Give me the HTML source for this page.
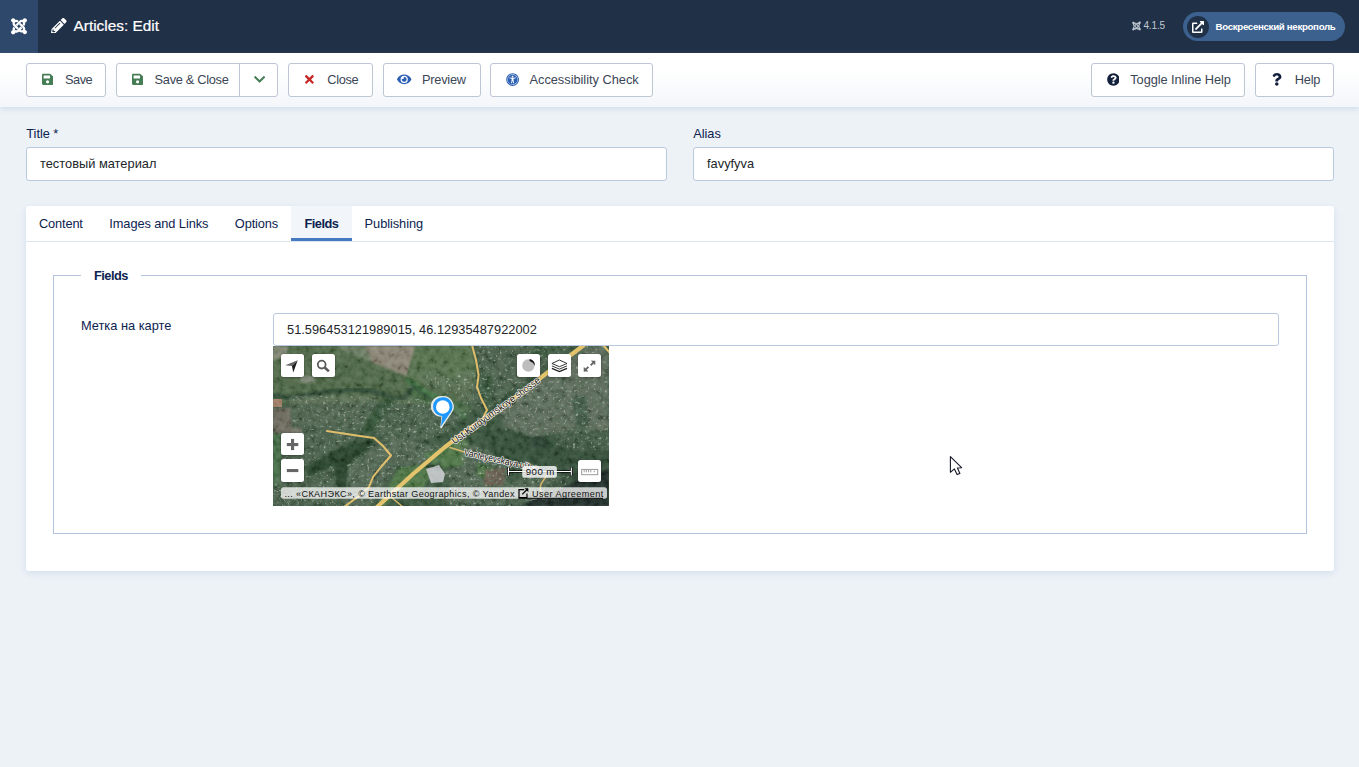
<!DOCTYPE html>
<html lang="en">
<head>
<meta charset="utf-8">
<title>Articles: Edit</title>
<style>
*{box-sizing:border-box;margin:0;padding:0}
html,body{width:1359px;height:767px;overflow:hidden}
body{font-family:"Liberation Sans",sans-serif;font-size:12.8px;color:#212529;background:#edf2f7;position:relative}
svg{display:block}
.abs{position:absolute}
.t{position:absolute;white-space:nowrap;line-height:1}

/* header */
#header{position:absolute;left:0;top:0;width:1359px;height:53px;background:#1f3047}
#logo{position:absolute;left:0;top:0;width:38px;height:53px;background:#2e486b}
#logo svg{position:absolute;left:11px;top:16.9px;width:16px;height:18.3px}
#ptitle svg{position:absolute;left:51px;top:17.7px;width:15.6px;height:15.6px}
#ptitle .t{left:73.5px;top:17.9px;font-size:15.4px;color:#fff;font-weight:400;-webkit-text-stroke:.22px #fff}
#ver{position:absolute;left:1132px;top:21px;height:10px}
#ver svg{position:absolute;left:0;top:0;width:9px;height:10px}
#ver .t{left:11.4px;top:0;font-size:10px;color:#c3cad5;letter-spacing:-.12px}
#pill{position:absolute;left:1183px;top:12px;width:162px;height:29px;border-radius:15px;background:#3d618f}
#pill .circ{position:absolute;left:4px;top:3.5px;width:22px;height:22px;border-radius:50%;background:#1f3047}
#pill svg{position:absolute;left:9px;top:8.5px;width:12px;height:12px}
#pill .t{left:32.6px;top:9.6px;font-size:9.7px;color:#fff;font-weight:700;letter-spacing:-.32px}

/* subhead toolbar */
#subhead{position:absolute;left:0;top:53px;width:1359px;height:54px;background:linear-gradient(#fff,#fff 30%,#f3f6fa);box-shadow:0 2px 5px rgba(150,178,208,.32)}
.btn{position:absolute;top:10px;height:34px;background:#fff;border:1px solid #bcc6d4;border-radius:3px;color:#3b4656;font-size:12.8px}
.btn .t{top:9.5px}
.btn svg{position:absolute}

/* form */
.lbl{color:#0c2350;font-size:12.8px}
.inp{position:absolute;height:34px;background:#fff;border:1px solid #b8c9e0;border-radius:3px}
.inp .t{left:13px;top:10px;letter-spacing:.02px;font-size:12.8px;color:#212529}

#card{position:absolute;left:26px;top:206px;width:1308px;height:365px;background:#fff;border-radius:3px;box-shadow:0 2px 7px rgba(150,178,208,.3)}
#tabs{position:absolute;left:0;top:0;width:1308px;height:36px;border-bottom:1px solid #dbe3ef}
#tabs .t{top:11.5px;color:#0c2350;font-size:12.8px}
#tab-act{position:absolute;left:265px;top:0;width:61px;height:35px;background:#f2f5f9;box-shadow:inset 0 -3px 0 #457ac1}
#fs{position:absolute;left:27px;top:69px;width:1254px;height:259px;border:1px solid #b3c3dc}
#legend{position:absolute;left:27px;top:-8px;width:60px;height:16px;background:#fff}
#legend .t{left:13px;top:1.5px;letter-spacing:-.5px;font-weight:700;color:#0c2350;font-size:12.8px}
</style>
</head>
<body>

<div id="header">
  <div id="logo">
    <svg viewBox="0 0 448 512"><path fill="#fff" d="M.6 92.100C.6 58.800 27.400 32 60.400 32c30 0 54.500 21.900 59.200 50.200 32.600-7.600 67.100.6 96.500 30l-44.300 44.300c-20.500-20.500-42.600-16.300-55.400-3.500-14.300 14.300-14.300 37.900 0 52.200l99.500 99.500-44 44.300c-87.700-87.200-49.700-49.700-99.800-99.700-26.800-26.500-35-64.800-24.800-98.900C20.400 144.600.6 120.700.6 92.100zm129.500 116.400l44.300 44.300c10-10 89.700-89.700 99.700-99.800 14.300-14.300 37.600-14.300 51.900 0 12.800 12.800 17 35-3.500 55.400l44 44.300c31.200-31.200 38.500-67.600 28.900-101.200 29.200-4.100 51.900-29.200 51.900-59.500 0-33.200-26.800-60.100-59.800-60.100-30.300 0-55.400 22.500-59.500 51.600-33.800-9.900-71.700-1.500-98.300 25.100-18.300 19.100-71.100 71.500-99.600 99.900zm266.300 152.200c8.200-32.700-.9-68.500-26.300-93.900-11.800-12.200 5 4.700-99.500-99.700l-44.300 44.300 99.700 99.700c14.300 14.300 14.300 37.600 0 51.900-12.800 12.800-35 17-55.400-3.500l-44 44.300c27.600 30.200 68 38.800 102.700 28 5.500 27.400 29.700 48.100 58.900 48.100 33 0 59.800-26.800 59.800-60.100 0-30.200-22.500-55-51.600-59.100zm-84.300-53.100l-44-44.300c-87 86.400-50.400 50.400-99.700 99.800-14.300 14.300-37.600 14.300-51.900 0-13.100-13.400-11.800-37.600 0-49.300l-44-44.300c-26.200 26.200-35 64.800-24.800 98.900C21.300 373.500.6 397.400.6 426c0 33.300 26.800 60.100 59.800 60.100 29.200 0 53.700-21 58.900-48.400 34.400 10.800 74.800 2.600 102.400-27.700 25-24.700 72.300-72.200 90.400-90.400z"/></svg>
  </div>
  <div id="ptitle">
    <svg viewBox="0 0 512 512"><path fill="#fff" d="M497.900 142.100l-46.100 46.100c-4.700 4.700-12.300 4.700-17 0l-111-111c-4.700-4.700-4.700-12.300 0-17l46.100-46.100c18.700-18.700 49.100-18.700 67.900 0l60.100 60.100c18.800 18.700 18.800 49.100 0 67.900zM284.200 99.800L21.600 362.400.4 483.900c-2.900 16.400 11.400 30.600 27.800 27.800l121.500-21.300 262.600-262.600c4.700-4.700 4.700-12.300 0-17l-111-111c-4.800-4.700-12.400-4.700-17.100 0zM124.100 339.900c-5.500-5.500-5.500-14.300 0-19.800l154-154c5.500-5.500 14.300-5.500 19.800 0s5.500 14.300 0 19.800l-154 154c-5.500 5.500-14.300 5.500-19.800 0zM88 424h48v36.300l-64.500 11.300-31.100-31.100L51.700 376H88v48z"/></svg>
    <span class="t">Articles: Edit</span>
  </div>
  <div id="ver">
    <svg viewBox="0 0 448 512"><path fill="#c3cad5" d="M.6 92.100C.6 58.800 27.400 32 60.400 32c30 0 54.500 21.900 59.200 50.200 32.600-7.600 67.100.6 96.500 30l-44.300 44.300c-20.500-20.500-42.600-16.300-55.400-3.500-14.300 14.300-14.300 37.900 0 52.200l99.500 99.500-44 44.300c-87.700-87.200-49.700-49.700-99.800-99.700-26.800-26.500-35-64.800-24.800-98.900C20.400 144.600.6 120.700.6 92.100zm129.500 116.400l44.300 44.300c10-10 89.700-89.700 99.700-99.800 14.300-14.300 37.600-14.300 51.900 0 12.800 12.800 17 35-3.500 55.400l44 44.300c31.200-31.200 38.500-67.600 28.900-101.200 29.200-4.100 51.900-29.200 51.900-59.500 0-33.200-26.800-60.100-59.800-60.100-30.300 0-55.400 22.500-59.500 51.600-33.800-9.900-71.700-1.500-98.300 25.100-18.300 19.100-71.100 71.500-99.600 99.900zm266.300 152.200c8.200-32.700-.9-68.500-26.300-93.900-11.800-12.200 5 4.700-99.500-99.700l-44.300 44.300 99.700 99.700c14.300 14.300 14.300 37.600 0 51.900-12.800 12.800-35 17-55.400-3.500l-44 44.300c27.600 30.200 68 38.800 102.700 28 5.500 27.400 29.700 48.100 58.900 48.100 33 0 59.800-26.800 59.800-60.100 0-30.200-22.500-55-51.600-59.100zm-84.300-53.100l-44-44.300c-87 86.400-50.400 50.400-99.700 99.800-14.300 14.300-37.600 14.300-51.900 0-13.100-13.400-11.800-37.600 0-49.300l-44-44.300c-26.200 26.200-35 64.800-24.800 98.900C21.300 373.500.6 397.400.6 426c0 33.300 26.800 60.100 59.800 60.100 29.200 0 53.700-21 58.900-48.400 34.400 10.800 74.800 2.600 102.400-27.700 25-24.700 72.300-72.200 90.400-90.400z"/></svg>
    <span class="t">4.1.5</span>
  </div>
  <div id="pill">
    <div class="circ"></div>
    <svg viewBox="0 0 512 512"><path fill="#fff" d="M432,320H400a16,16,0,0,0-16,16V448H64V128H208a16,16,0,0,0,16-16V80a16,16,0,0,0-16-16H48A48,48,0,0,0,0,112V464a48,48,0,0,0,48,48H400a48,48,0,0,0,48-48V336A16,16,0,0,0,432,320ZM488,0h-128c-21.370,0-32.050,25.910-17,41l35.730,35.730L135,320.370a24,24,0,0,0,0,34L157.670,377a24,24,0,0,0,34,0L435.280,133.320,471,169c15,15,41,4.500,41-17V24A24,24,0,0,0,488,0Z"/></svg>
    <span class="t">Воскресенский некрополь</span>
  </div>
</div>

<div id="subhead">
<div class="btn" style="left:26px;width:80px"><svg viewBox="0 0 448 512" style="left:15.05px;top:8.55px;width:11.2px;height:12.8px"><path fill="#457d54" d="M433.941 129.941l-83.882-83.882A48 48 0 0 0 316.118 32H48C21.49 32 0 53.49 0 80v352c0 26.51 21.49 48 48 48h352c26.51 0 48-21.49 48-48V163.882a48 48 0 0 0-14.059-33.941zM224 416c-35.346 0-64-28.654-64-64 0-35.346 28.654-64 64-64s64 28.654 64 64c0 35.346-28.654 64-64 64zm96-304.52V212c0 6.627-5.373 12-12 12H76c-6.627 0-12-5.373-12-12V108c0-6.627 5.373-12 12-12h228.52c3.183 0 6.235 1.264 8.485 3.515l3.48 3.48A11.996 11.996 0 0 1 320 111.48z"/></svg><span class="t" style="left:38px;letter-spacing:-0.5px">Save</span></div>
<div class="btn" style="left:116px;width:124px;border-radius:3px 0 0 3px"><svg viewBox="0 0 448 512" style="left:15.25px;top:8.55px;width:11.2px;height:12.8px"><path fill="#457d54" d="M433.941 129.941l-83.882-83.882A48 48 0 0 0 316.118 32H48C21.49 32 0 53.49 0 80v352c0 26.51 21.49 48 48 48h352c26.51 0 48-21.49 48-48V163.882a48 48 0 0 0-14.059-33.941zM224 416c-35.346 0-64-28.654-64-64 0-35.346 28.654-64 64-64s64 28.654 64 64c0 35.346-28.654 64-64 64zm96-304.52V212c0 6.627-5.373 12-12 12H76c-6.627 0-12-5.373-12-12V108c0-6.627 5.373-12 12-12h228.52c3.183 0 6.235 1.264 8.485 3.515l3.48 3.48A11.996 11.996 0 0 1 320 111.48z"/></svg><span class="t" style="left:37.599999999999994px;letter-spacing:-0.3px">Save &amp; Close</span></div>
<div class="btn" style="left:239px;width:39px;border-radius:0 3px 3px 0"><svg viewBox="0 0 448 512" style="left:13.6px;top:8.8px;width:11.2px;height:12.8px"><path fill="#457d54" d="M207.029 381.476L12.686 187.132c-9.373-9.373-9.373-24.569 0-33.941l22.667-22.667c9.357-9.357 24.522-9.375 33.901-.04L224 284.505l154.745-154.021c9.379-9.335 24.544-9.317 33.901.04l22.667 22.667c9.373 9.373 9.373 24.569 0 33.941L240.971 381.476c-9.373 9.372-24.569 9.372-33.942 0z"/></svg></div>
<div class="btn" style="left:288px;width:85px"><svg viewBox="0 0 352 512" style="left:16.3px;top:8.85px;width:8.8px;height:12.8px"><path fill="#c52827" d="M242.72 256l100.07-100.07c12.28-12.28 12.28-32.19 0-44.48l-22.24-22.24c-12.28-12.28-32.19-12.28-44.48 0L176 189.28 75.93 89.21c-12.28-12.28-32.19-12.28-44.48 0L9.21 111.45c-12.28 12.28-12.28 32.19 0 44.48L109.28 256 9.21 356.07c-12.28 12.28-12.28 32.19 0 44.48l22.24 22.24c12.28 12.28 32.2 12.28 44.48 0L176 322.72l100.07 100.07c12.28 12.28 32.2 12.28 44.48 0l22.24-22.24c12.28-12.28 12.28-32.19 0-44.48L242.72 256z"/></svg><span class="t" style="left:38.19999999999999px;letter-spacing:-0.3px">Close</span></div>
<div class="btn" style="left:383px;width:98px"><svg viewBox="0 0 576 512" style="left:13.4px;top:8.7px;width:14.4px;height:12.8px"><path fill="#2a5fb4" d="M572.52 241.4C518.29 135.59 410.93 64 288 64S57.68 135.64 3.48 241.41a32.35 32.35 0 0 0 0 29.19C57.71 376.41 165.07 448 288 448s230.32-71.64 284.52-177.41a32.35 32.35 0 0 0 0-29.19zM288 400a144 144 0 1 1 144-144 143.93 143.93 0 0 1-144 144zm0-240a95.31 95.31 0 0 0-25.31 3.79 47.85 47.85 0 0 1-66.9 66.9A95.78 95.78 0 1 0 288 160z"/></svg><span class="t" style="left:38px;letter-spacing:-0.25px">Preview</span></div>
<div class="btn" style="left:490px;width:163px"><svg viewBox="0 0 512 512" style="left:14.55px;top:8.55px;width:13.2px;height:13.2px"><path fill="#2a5fb4" d="M256 48c114.953 0 208 93.029 208 208 0 114.953-93.029 208-208 208-114.953 0-208-93.029-208-208 0-114.953 93.029-208 208-208m0-40C119.033 8 8 119.033 8 256s111.033 248 248 248 248-111.033 248-248S392.967 8 256 8zm0 56C149.961 64 64 149.961 64 256s85.961 192 192 192 192-85.961 192-192S362.039 64 256 64zm0 44c19.882 0 36 16.118 36 36s-16.118 36-36 36-36-16.118-36-36 16.118-36 36-36zm117.741 98.023c-28.712 6.779-55.511 12.748-82.140 15.807.851 101.023 12.306 123.052 25.037 155.621 3.617 9.260-.957 19.698-10.217 23.315-9.261 3.617-19.699-.957-23.316-10.217-8.705-22.308-17.086-40.636-22.261-78.549h-9.686c-5.167 37.851-13.534 56.208-22.262 78.549-3.615 9.255-14.050 13.836-23.315 10.217-9.260-3.617-13.834-14.056-10.217-23.315 12.713-32.541 24.185-54.541 25.037-155.621-26.629-3.058-53.428-9.027-82.141-15.807-8.600-2.031-13.926-10.648-11.895-19.249s10.647-13.926 19.249-11.895c96.686 22.829 124.283 22.783 220.775 0 8.599-2.030 17.218 3.294 19.249 11.895 2.029 8.601-3.297 17.219-11.897 19.249z"/></svg><span class="t" style="left:38.5px;letter-spacing:-0.02px">Accessibility Check</span></div>
<div class="btn" style="left:1091px;width:154px"><svg viewBox="0 0 512 512" style="left:14.5px;top:8.9px;width:12.9px;height:12.9px"><path fill="#14213d" d="M504 256c0 136.997-111.043 248-248 248S8 392.997 8 256C8 119.083 119.043 8 256 8s248 111.083 248 248zM262.655 90c-54.497 0-89.255 22.957-116.549 63.758-3.536 5.286-2.353 12.415 2.715 16.258l34.699 26.31c5.205 3.947 12.621 3.008 16.665-2.122 17.864-22.658 30.113-35.797 57.303-35.797 20.429 0 45.698 13.148 45.698 32.958 0 14.976-12.363 22.667-32.534 33.976C247.128 238.528 216 254.941 216 296v4c0 6.627 5.373 12 12 12h56c6.627 0 12-5.373 12-12v-1.333c0-28.462 83.186-29.647 83.186-106.667 0-58.002-60.165-102-116.531-102zM256 338c-25.365 0-46 20.635-46 46 0 25.364 20.635 46 46 46s46-20.636 46-46c0-25.365-20.635-46-46-46z"/></svg><span class="t" style="left:38.299999999999955px;letter-spacing:-0.07px">Toggle Inline Help</span></div>
<div class="btn" style="left:1255px;width:79px"><svg viewBox="0 0 384 512" style="left:16.1px;top:8.75px;width:9.6px;height:12.8px"><path fill="#14213d" d="M202.021 0C122.202 0 70.503 32.703 29.914 91.026c-7.363 10.58-5.093 25.086 5.178 32.874l43.138 32.709c10.373 7.865 25.132 6.026 33.253-4.148 25.049-31.381 43.63-49.449 82.757-49.449 30.764 0 68.816 19.799 68.816 49.631 0 22.552-18.617 34.134-48.993 51.164-35.423 19.86-82.299 44.576-82.299 106.405V320c0 13.255 10.745 24 24 24h72.471c13.255 0 24-10.745 24-24v-5.773c0-42.86 125.268-44.645 125.268-160.627C377.504 66.256 286.902 0 202.021 0zM192 373.459c-38.196 0-69.271 31.075-69.271 69.271 0 38.195 31.075 69.27 69.271 69.27s69.271-31.075 69.271-69.271-31.075-69.27-69.271-69.27z"/></svg><span class="t" style="left:38.799999999999955px;letter-spacing:-0.25px">Help</span></div>
</div>

<!-- title / alias -->
<span class="t lbl" style="left:26.3px;top:128px;letter-spacing:-.05px">Title *</span>
<div class="inp" style="left:26px;top:147px;width:641px"><span class="t">тестовый материал</span></div>
<span class="t lbl" style="left:693.3px;top:128px;letter-spacing:-.05px">Alias</span>
<div class="inp" style="left:693px;top:147px;width:641px"><span class="t">favyfyva</span></div>

<div id="card">
  <div id="tabs">
    <div id="tab-act"></div>
    <span class="t" style="left:13px;letter-spacing:-.15px">Content</span>
    <span class="t" style="left:83.3px;letter-spacing:-.08px">Images and Links</span>
    <span class="t" style="left:208.8px;letter-spacing:-.12px">Options</span>
    <span class="t" style="left:278.5px;font-weight:700;letter-spacing:-.5px">Fields</span>
    <span class="t" style="left:338.6px;letter-spacing:-.06px">Publishing</span>
  </div>
  <div id="fs">
    <div id="legend"><span class="t">Fields</span></div>
    <span class="t lbl" style="left:27px;top:44px">Метка на карте</span>
    <div class="inp" style="left:219px;top:37px;width:1006px;height:33px"><span class="t">51.596453121989015, 46.12935487922002</span></div>
    <div id="map" style="position:absolute;left:219px;top:70px;width:336px;height:160px;background:#3f6a3c;overflow:hidden">
<!--MAP-START-->
<svg width="336" height="160" viewBox="0 0 336 160" style="position:absolute;left:0;top:0">

<defs>
  <filter id="tex" x="0" y="0" width="100%" height="100%">
    <feTurbulence type="fractalNoise" baseFrequency="0.16" numOctaves="4" seed="7"/>
    <feColorMatrix type="matrix" values="1.5 0 0 0 -0.32  1.5 0 0 0 -0.32  1.5 0 0 0 -0.32  0 0 0 0 1"/>
  </filter>
  <filter id="speck" x="0" y="0" width="100%" height="100%">
    <feTurbulence type="fractalNoise" baseFrequency="0.34" numOctaves="2" seed="11" result="n"/>
    <feColorMatrix in="n" type="matrix" values="0 0 0 0 0.70  0 0 0 0 0.74  0 0 0 0 0.68  5 0 0 0 -3.0" result="d"/>
    <feGaussianBlur in="d" stdDeviation="0.45" result="e"/>
    <feComposite in="e" in2="SourceGraphic" operator="in"/>
  </filter>
  <filter id="speck2" x="0" y="0" width="100%" height="100%">
    <feTurbulence type="fractalNoise" baseFrequency="0.3" numOctaves="2" seed="23" result="n"/>
    <feColorMatrix in="n" type="matrix" values="0 0 0 0 0.10  0 0 0 0 0.22  0 0 0 0 0.12  0 7 0 0 -3.8" result="d"/>
    <feGaussianBlur in="d" stdDeviation="0.6" result="e"/>
    <feComposite in="e" in2="SourceGraphic" operator="in"/>
  </filter>
  <filter id="b1"><feGaussianBlur stdDeviation="1.2"/></filter>
  <filter id="b2"><feGaussianBlur stdDeviation="2.2"/></filter>
  <filter id="b05"><feGaussianBlur stdDeviation="0.45"/></filter>
  <filter id="sh" x="-30%" y="-30%" width="160%" height="170%"><feGaussianBlur stdDeviation="1.1"/></filter>
</defs>
<clipPath id="rc"><polygon points="16,50 60,49 108,50 96,70 88,84 30,82 18,80"/><polygon points="112,56 140,52 172,58 196,66 178,84 150,96 120,100 100,86"/><polygon points="146,27 160,26 184,36 186,48 170,47 150,38"/><polygon points="182,30 200,26 207,40 212,62 196,66 186,52"/><polygon points="30,82 64,82 90,90 60,104 34,120 10,118 9,90"/><polygon points="8,124 34,130 60,118 64,140 70,160 0,160 0,140"/><polygon points="74,118 100,96 118,104 126,118 110,140 98,160 72,160 73,140"/><polygon points="104,92 150,96 172,100 150,120 128,122 119,108"/><polygon points="203,0 250,0 300,0 270,24 240,44 222,58 214,64 206,40 207,28"/><polygon points="270,30 312,0 336,0 336,86 300,84 262,92 232,84 226,66"/><polygon points="186,96 214,104 236,118 232,140 196,142 176,140 172,124 190,120"/><polygon points="280,80 336,78 336,104 300,104 282,98"/><polygon points="176,140 232,140 262,126 296,130 290,150 240,160 170,160"/></clipPath>
<g style="filter:saturate(.8) brightness(.97)">
<rect width="336" height="160" fill="#36573a"/>
<polygon points="0,0 200,0 200,56 150,58 100,56 40,58 0,58" fill="#49693f" opacity="1" filter="url(#b1)"/>
<polygon points="0,0 15,0 13,11 0,14" fill="#828870" opacity="0.9" filter="url(#b1)"/>
<polygon points="64,0 93,0 99,16 84,10 68,4" fill="#6b7f60" opacity="0.9" filter="url(#b1)"/>
<polygon points="92,0 143,0 134,30 99,16.5" fill="#8b846f" opacity="1" filter="url(#b1)"/>
<polygon points="27,30 41,29 42,36 28,37" fill="#7f8a76" opacity="0.9" filter="url(#b1)"/>
<polygon points="143,0 199,0 204,30 200,42 170,44 140,34 134,30" fill="#507245" opacity="1" filter="url(#b1)"/>
<polygon points="140,40 172,52 200,60 196,68 160,62 138,54" fill="#3f6e3d" opacity="0.9" filter="url(#b1)"/>
<path d="M-2,49 C14,54 30,49 48,47 S84,42 98,45 S118,54 132,52 L138,43" fill="none" stroke="#27482e" stroke-width="5" stroke-linecap="round" stroke-linejoin="round" opacity="0.95" filter="url(#b1)"/>
<path d="M136,35 L152,46 L172,57 L190,70" fill="none" stroke="#37763a" stroke-width="5.5" stroke-linecap="round" stroke-linejoin="round" opacity="0.95" filter="url(#b1)"/>
<path d="M138,39 L152,49.5 L170,60 L186,71" fill="none" stroke="#21402a" stroke-width="2.2" stroke-linecap="round" stroke-linejoin="round" opacity="0.8" filter="url(#b1)"/>
<path d="M204,28 C206,44 208,54 214,66" fill="none" stroke="#254a2e" stroke-width="6" stroke-linecap="round" stroke-linejoin="round" opacity="0.85" filter="url(#b1)"/>
<polygon points="16,50 60,49 108,50 96,70 88,84 30,82 18,80" fill="#78806f" opacity="0.275" filter="url(#b2)"/>
<polygon points="112,56 140,52 172,58 196,66 178,84 150,96 120,100 100,86" fill="#6f7c68" opacity="0.25" filter="url(#b2)"/>
<polygon points="146,27 160,26 184,36 186,48 170,47 150,38" fill="#5f6d5b" opacity="0.3" filter="url(#b2)"/>
<polygon points="182,30 200,26 207,40 212,62 196,66 186,52" fill="#6a7565" opacity="0.25" filter="url(#b2)"/>
<polygon points="0,53 9,53 9,61 0,61" fill="#b37d5f" opacity="0.9" filter="url(#b05)"/>
<polygon points="0,62 17,62 19,82 29,82 29,87 0,88" fill="#6f6b5b" opacity="0.95" filter="url(#b1)"/>
<polygon points="0,88 8,88 8,140 0,140" fill="#3c7040" opacity="0.95" filter="url(#b1)"/>
<polygon points="112,52 125,52 108,74 96,90 88,84 100,66" fill="#2f5533" opacity="0.9" filter="url(#b1)"/>
<polygon points="30,82 64,82 90,90 60,104 34,120 10,118 9,90" fill="#6d7866" opacity="0.25" filter="url(#b2)"/>
<polygon points="8,124 34,130 60,118 64,140 70,160 0,160 0,140" fill="#66725f" opacity="0.25" filter="url(#b2)"/>
<polygon points="74,118 100,96 118,104 126,118 110,140 98,160 72,160 73,140" fill="#7a8475" opacity="0.3" filter="url(#b2)"/>
<polygon points="32,121.5 61,105 97,93 103,98 87,111 75,118 73,140 64,140 61,118 36,130.5" fill="#244226" opacity="0.95" filter="url(#b1)"/>
<polygon points="104,92 150,96 172,100 150,120 128,122 119,108" fill="#788273" opacity="0.275" filter="url(#b2)"/>
<polygon points="126,122 150,119 160,126 150,142 128,144 112,160 104,160" fill="#477a3e" opacity="0.95" filter="url(#b1)"/>
<polygon points="150,108 172,102 180,96 172,112 160,120" fill="#457a3d" opacity="0.9" filter="url(#b1)"/>
<polygon points="153,123 166,119 172,128 170,136 158,137" fill="#c6cacc" opacity="0.95" filter="url(#b05)"/>
<polygon points="203,0 250,0 300,0 270,24 240,44 222,58 214,64 206,40 207,28" fill="#66735f" opacity="0.3" filter="url(#b2)"/>
<polygon points="208,28 220,30 218,62 214,64 205,42" fill="#2f5533" opacity="0.8" filter="url(#b1)"/>
<polygon points="262,0 290,0 262,18 250,14" fill="#2f5533" opacity="0.7" filter="url(#b1)"/>
<polygon points="270,30 312,0 336,0 336,86 300,84 262,92 232,84 226,66" fill="#84857a" opacity="0.425" filter="url(#b2)"/>
<polygon points="300,52 312,50 316,86 304,88" fill="#31553a" opacity="0.8" filter="url(#b1)"/>
<polygon points="167,106 184,92 196,96 190,120 168,122" fill="#477a3e" opacity="0.95" filter="url(#b1)"/>
<polygon points="186,96 214,104 236,118 232,140 196,142 176,140 172,124 190,120" fill="#7a8272" opacity="0.3" filter="url(#b2)"/>
<polygon points="204,117 221,122 216,134 204,130" fill="#477a3e" opacity="0.95" filter="url(#b1)"/>
<polygon points="212,124 232,122 231,139 211,140" fill="#6c5b4b" opacity="0.95" filter="url(#b1)"/>
<polygon points="206,84 240,84 262,92 300,86 336,86 336,128 300,128 270,118 236,118 214,104" fill="#2f5035" opacity="0.95" filter="url(#b1)"/>
<polygon points="254,92 274,90 276,104 258,102" fill="#27432d" opacity="0.9" filter="url(#b1)"/>
<polygon points="280,80 336,78 336,104 300,104 282,98" fill="#66745f" opacity="0.225" filter="url(#b2)"/>
<polygon points="176,140 232,140 262,126 296,130 290,150 240,160 170,160" fill="#727c6c" opacity="0.275" filter="url(#b2)"/>
<polygon points="336,122 300,136 262,152 246,160 336,160" fill="#1d2c27" opacity="0.95" filter="url(#b1)"/>
<polygon points="336,112 296,128 262,146 250,152 262,152 300,136 336,122" fill="#2d4a33" opacity="0.8" filter="url(#b1)"/>
<rect width="336" height="160" filter="url(#tex)" style="mix-blend-mode:soft-light" opacity=".42"/>
<g clip-path="url(#rc)"><rect width="336" height="160" fill="#fff" filter="url(#speck)" opacity=".5"/><rect width="336" height="160" fill="#000" filter="url(#speck2)" opacity=".45"/></g>
</g>

<g fill="none" stroke-linecap="round" stroke-linejoin="round" filter="url(#b05)">
  <path d="M311,-1 L262,36 L228,62 L197,82 L172,101 L140,128 L104,161" stroke="#e3c36c" stroke-width="4.2"/>
  <path d="M330,-1 L337,7" stroke="#e3c36c" stroke-width="2"/>
  <path d="M199,-1 L203,14 L205.6,29 L204,41 L208,52 L214,64 L210,72" stroke="#e0be6c" stroke-width="2"/>
  <path d="M54,85 L80,89 L101,92 L110,100 L118,109.5 L108,121 L100,131 L96,141 L86,150 L71,161" stroke="#e0be6c" stroke-width="2"/>
  <path d="M177,101.5 L191.5,106 L215,114 L262,121" stroke="#d8b76c" stroke-width="1.5"/>
  <path d="M274,129 L268,138 L267,143 L271,152" stroke="#d8b76c" stroke-width="1.4"/>
  <path d="M118,151 L130,161" stroke="#d8b76c" stroke-width="1.4"/>
</g>


<g font-family="Liberation Sans, sans-serif">
  <!-- road labels -->
  <g font-size="9.6" fill="#161616" stroke="#fff" stroke-width="1.5" stroke-opacity=".8" stroke-linejoin="round" paint-order="stroke" style="paint-order:stroke">
    <text transform="translate(181.6,98.6) rotate(-36)" textLength="107" lengthAdjust="spacing">Ust-Kurdyumskoye shosse</text>
    <text transform="translate(190.5,109.2) rotate(12.5)" textLength="76" lengthAdjust="spacing" font-size="9">Vanteyevskaya ulitsa</text>
  </g>
  <!-- pin -->
  <g>
    <path d="M169.7,50 a10.4,10.4 0 1 0 -1.2,20.7 L167.2,81.6 a1,1 0 0 0 1.6,.5 L178.6,67 a10.6,10.6 0 0 0 -8.9,-17z" fill="#fff" opacity=".85"/>
    <path d="M169.7,51.2 a9.5,9.5 0 1 0 -.4,19 L167.8,80.6 L177.6,66.3 a9.5,9.5 0 0 0 -7.9,-15.1z" fill="#1e98ff"/>
    <circle cx="169.8" cy="61" r="6.8" fill="#fff"/>
  </g>
  <!-- button shadows + buttons -->
  <g fill="#000" opacity=".35" filter="url(#sh)">
    <rect x="8" y="8.8" width="23" height="23" rx="2.5"/><rect x="39" y="8.8" width="23" height="23" rx="2.5"/>
    <rect x="244" y="8.8" width="23" height="23" rx="2.5"/><rect x="275" y="8.8" width="23" height="23" rx="2.5"/><rect x="305" y="8.8" width="23" height="23" rx="2.5"/>
    <rect x="8" y="87.8" width="23" height="22" rx="2.5"/><rect x="8" y="113.8" width="23" height="23" rx="2.5"/>
    <rect x="305" y="114.8" width="23" height="22" rx="2.5"/>
  </g>
  <g fill="#fff">
    <rect x="8" y="8" width="23" height="23" rx="2.5"/><rect x="39" y="8" width="23" height="23" rx="2.5"/>
    <rect x="244" y="8" width="23" height="23" rx="2.5"/><rect x="275" y="8" width="23" height="23" rx="2.5"/><rect x="305" y="8" width="23" height="23" rx="2.5"/>
    <rect x="8" y="87" width="23" height="22" rx="2.5"/><rect x="8" y="113" width="23" height="23" rx="2.5"/>
    <rect x="305" y="114" width="23" height="22" rx="2.5"/>
  </g>
  <!-- locate -->
  <polygon points="24.7,14.2 12.2,19.3 18.9,20" fill="#666"/>
  <polygon points="24.7,14.2 18.9,20 20.3,26.6" fill="#1c1c1c"/>
  <!-- search -->
  <circle cx="48.7" cy="18.6" r="3.9" fill="none" stroke="#5b5b5b" stroke-width="1.8"/>
  <path d="M51.7,21.5 L55.9,25.4" stroke="#5b5b5b" stroke-width="2.6" fill="none"/>
  <!-- traffic -->
  <circle cx="255.4" cy="19.5" r="6.2" fill="#bdbdbd"/>
  <path d="M256.6,12.9 A6.6,6.6 0 0 1 262,19.8 A8.6,8.6 0 0 0 256.6,14.9z" fill="#111"/>
  <path d="M249.2,18.4 A6.4,6.4 0 0 1 255.8,13 A9,9 0 0 0 249.2,18.4z" fill="#dcdcdc"/>
  <!-- layers -->
  <g fill="none" stroke="#1f1f1f" stroke-linejoin="miter">
    <polygon points="286.4,14 278.9,17.5 286.4,20.7 294,17.5" stroke-width=".9"/>
    <polyline points="278.9,19.9 286.4,23.1 294,19.9" stroke-width=".9"/>
    <polyline points="278.9,22.3 286.4,25.6 294,22.3" stroke-width="1.35"/>
  </g>
  <!-- expand -->
  <g fill="#666" stroke="#666">
    <polygon points="318.2,14.7 322.2,14.9 322,18.9" stroke-width=".3"/>
    <path d="M320.6,16.4 L317.7,19.2" stroke-width="1.9" fill="none"/>
    <polygon points="310.9,21.3 310.9,25.4 315.1,25.3" stroke-width=".3"/>
    <path d="M312.6,23.7 L315.4,20.9" stroke-width="1.9" fill="none"/>
  </g>
  <!-- zoom + - -->
  <g fill="#666">
    <rect x="13.8" y="97" width="11.5" height="3.1"/><rect x="18" y="92.9" width="3.1" height="11.2"/>
    <rect x="13.8" y="123" width="11.5" height="3.1"/>
  </g>
  <!-- ruler -->
  <rect x="308.7" y="123.4" width="16" height="5.3" fill="#fff" stroke="#9a9a9a" stroke-width="1"/>
  <path d="M311.2,124 v2.3 M313.4,124 v2.3 M315.6,124 v2.3 M317.8,124 v2.3 M321.3,124.6 v1.6" stroke="#9a9a9a" stroke-width="1" fill="none"/>
  <!-- scale line -->
  <path d="M235.5,121.2 v8.6 M298.3,121.2 v8.6 M235.5,125.5 H298.3" stroke="#000" stroke-width="2.6" fill="none" opacity=".9"/>
  <path d="M235.5,121.6 v7.8 M298.3,121.6 v7.8 M235.5,125.5 H298.3" stroke="#fff" stroke-width="1.1" fill="none"/>
  <rect x="249.2" y="120" width="34.7" height="11.8" rx="2.6" fill="#fff" opacity=".8"/>
  <text x="252.8" y="129.1" font-size="9.7" fill="#111" textLength="28.6" lengthAdjust="spacing">900 m</text>
  <!-- copyright -->
  <rect x="8" y="141.2" width="326" height="11.6" rx="2.5" fill="#fff" opacity=".75"/>
  <text x="11.4" y="150.5" font-size="9.1" fill="#111" textLength="230.2" lengthAdjust="spacing">... «СКАНЭКС», © Earthstar Geographics, © Yandex</text>
  <g stroke="#000" fill="none" stroke-width="1.2">
    <path d="M251.2,143.6 H246 V151.6 H254 V147.4"/>
    <path d="M249.2,148.4 L254.6,143"/>
  </g>
  <polygon points="251.6,142.3 255.3,142.3 255.3,146" fill="#000"/>
  <text x="259.1" y="150.5" font-size="9.1" fill="#111" textLength="71.2" lengthAdjust="spacing">User Agreement</text>
  <path d="M245.5,152.3 H330" stroke="#000" stroke-width="1"/>
</g>

</svg>
<!--MAP-END-->
    </div>
  </div>
</div>

<svg class="abs" style="left:946px;top:452px;width:22px;height:28px" viewBox="946 452 22 28"><path d="M950.4,456.6 V472.3 L954.4,468.9 L957.1,474.6 L959.9,473.4 L957.4,468 L961.6,467.7 Z" fill="#fff" stroke="#15182a" stroke-width="1.1" stroke-linejoin="round"/></svg>
</body>
</html>
